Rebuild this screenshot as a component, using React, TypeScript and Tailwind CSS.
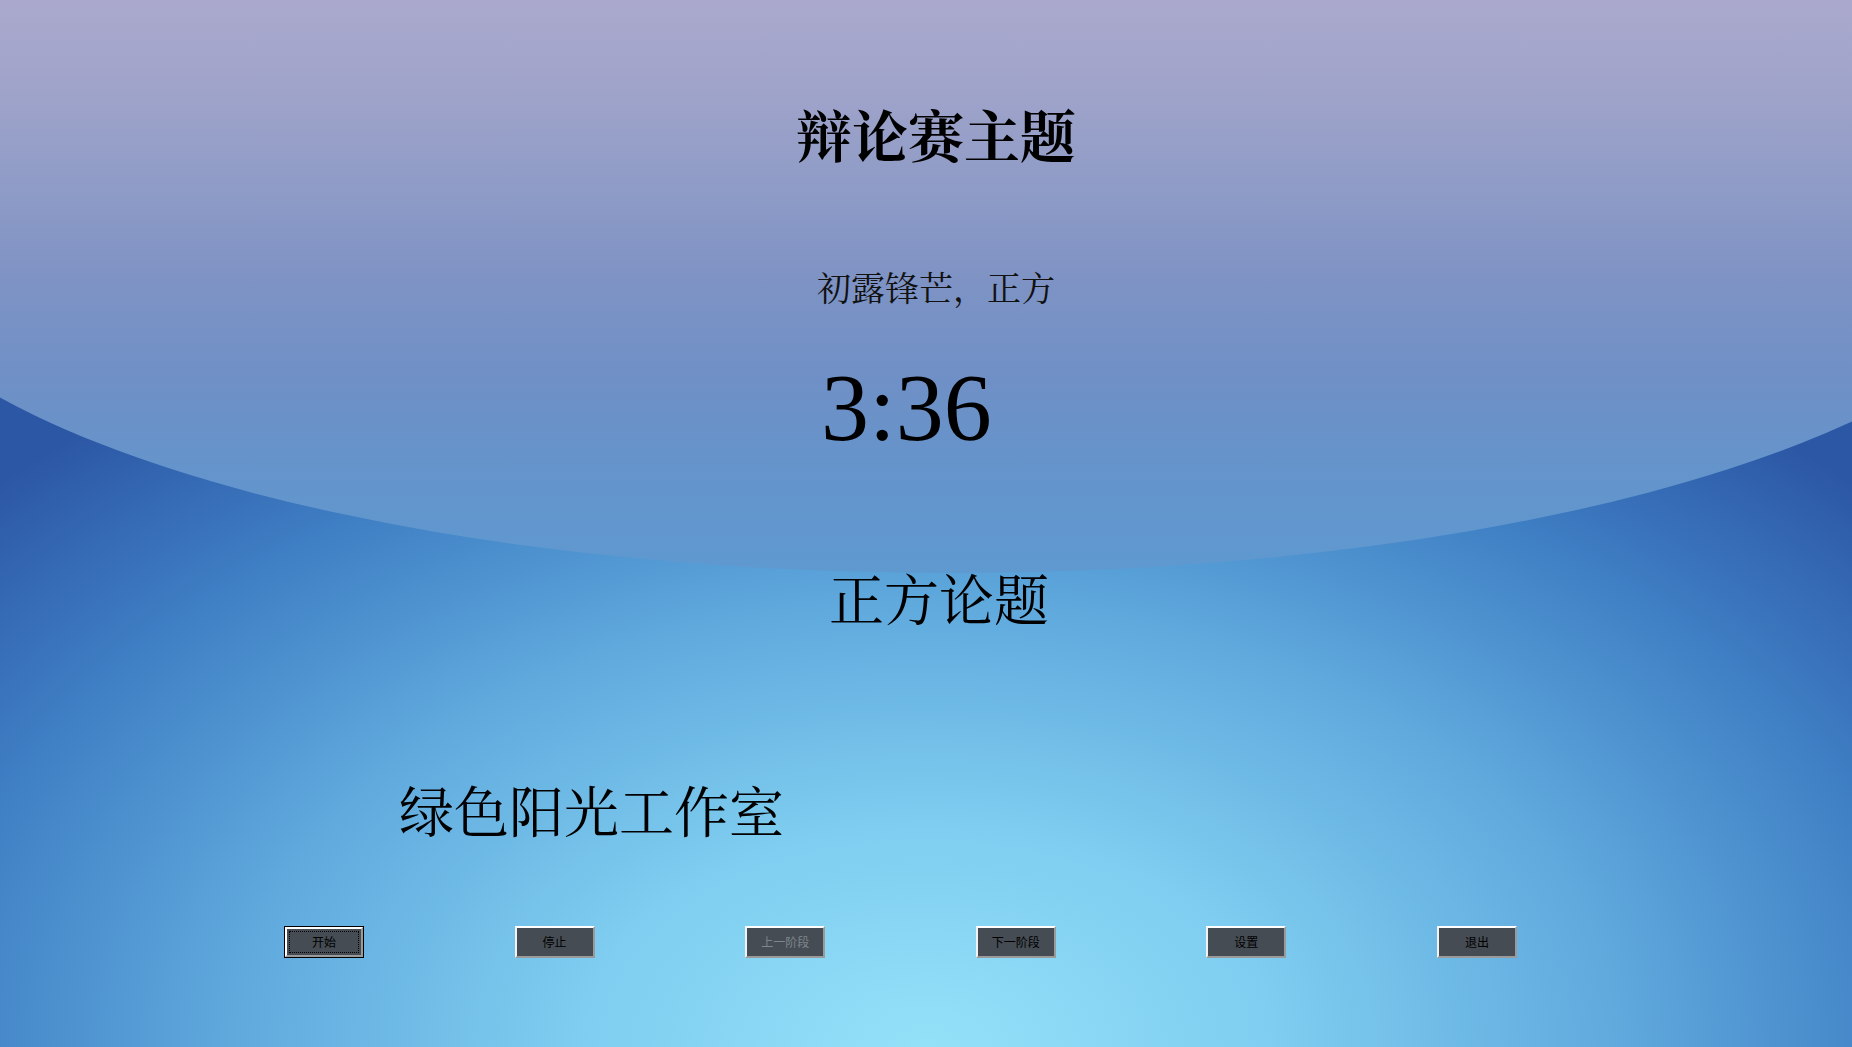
import React from 'react';

const cjk = 'font-["Noto_Serif_CJK_SC","Noto_Sans_CJK_SC",serif]';

interface ButtonProps {
  label: string;
  disabled?: boolean;
  focused?: boolean;
}

const WinButton: React.FC<ButtonProps> = ({ label, disabled, focused }) => {
  const text = disabled ? 'text-[#7f868d]' : 'text-black';
  if (focused) {
    return (
      <div className="w-[80px] h-[32px] border border-black">
        <div className="w-full h-full bg-[#454c53] border-t-2 border-l-2 border-t-white border-l-white border-b-2 border-r-2 border-b-[#9a9a9a] border-r-[#9a9a9a] p-[2px]">
          <div
            className={`w-full h-full border border-dotted border-black flex items-center justify-center text-[12px] leading-none font-["Noto_Sans_CJK_SC",sans-serif] ${text}`}
          >
            {label}
          </div>
        </div>
      </div>
    );
  }
  return (
    <div
      className={`w-[80px] h-[32px] bg-[#454c53] border-t-2 border-l-2 border-t-white border-l-[#f2f2f2] border-b-2 border-r-2 border-b-[#9a9a9a] border-r-[#9a9a9a] flex items-center justify-center text-[12px] leading-none font-["Noto_Sans_CJK_SC",sans-serif] ${text}`}
    >
      {label}
    </div>
  );
};

export default function App() {
  return (
    <div className="relative w-full h-[1047px] overflow-hidden bg-[radial-gradient(ellipse_75%_85%_at_50%_100%,#93e1f8_0%,#7fcdf0_25%,#5fa9dd_50%,#3f7fc4_72%,#2c57a5_92%)]">
      {/* upper dome of the wallpaper: flat top, elliptical bottom edge */}
      <div className="absolute left-[-150px] top-0 w-[2200px] h-[573px] rounded-bl-[1100px_354px] rounded-br-[1100px_354px] bg-[linear-gradient(to_bottom,#aaa9cd_0%,#a1a4ca_14%,#919dc7_30%,#7f93c4_48%,#6f90c6_66%,#6494cb_82%,#5e99d0_100%)]" />

      <div className="relative flex flex-col">
        <div className={`mt-[105px] pl-[20px] text-center text-[56px] leading-[56px] font-bold text-black ${cjk}`}>
          辩论赛主题
        </div>
        <div className={`mt-[109px] pl-[20px] text-center text-[34px] leading-[34px] text-[#111] ${cjk}`}>
          初露锋芒，正方
        </div>
        <div className='mt-[56px] pl-[821px] text-[96px] leading-[96px] text-black font-["Liberation_Serif",serif]'>
          3:36
        </div>
        <div className={`mt-[113px] pl-[829px] text-[55px] leading-[55px] text-black ${cjk}`}>
          正方论题
        </div>
        <div className={`mt-[157px] pl-[399px] text-[55px] leading-[55px] text-black ${cjk}`}>
          绿色阳光工作室
        </div>
        <div className="mt-[90px] pl-[284px] flex gap-[150.6px]">
          <WinButton label="开始" focused />
          <WinButton label="停止" />
          <WinButton label="上一阶段" disabled />
          <WinButton label="下一阶段" />
          <WinButton label="设置" />
          <WinButton label="退出" />
        </div>
      </div>
    </div>
  );
}
